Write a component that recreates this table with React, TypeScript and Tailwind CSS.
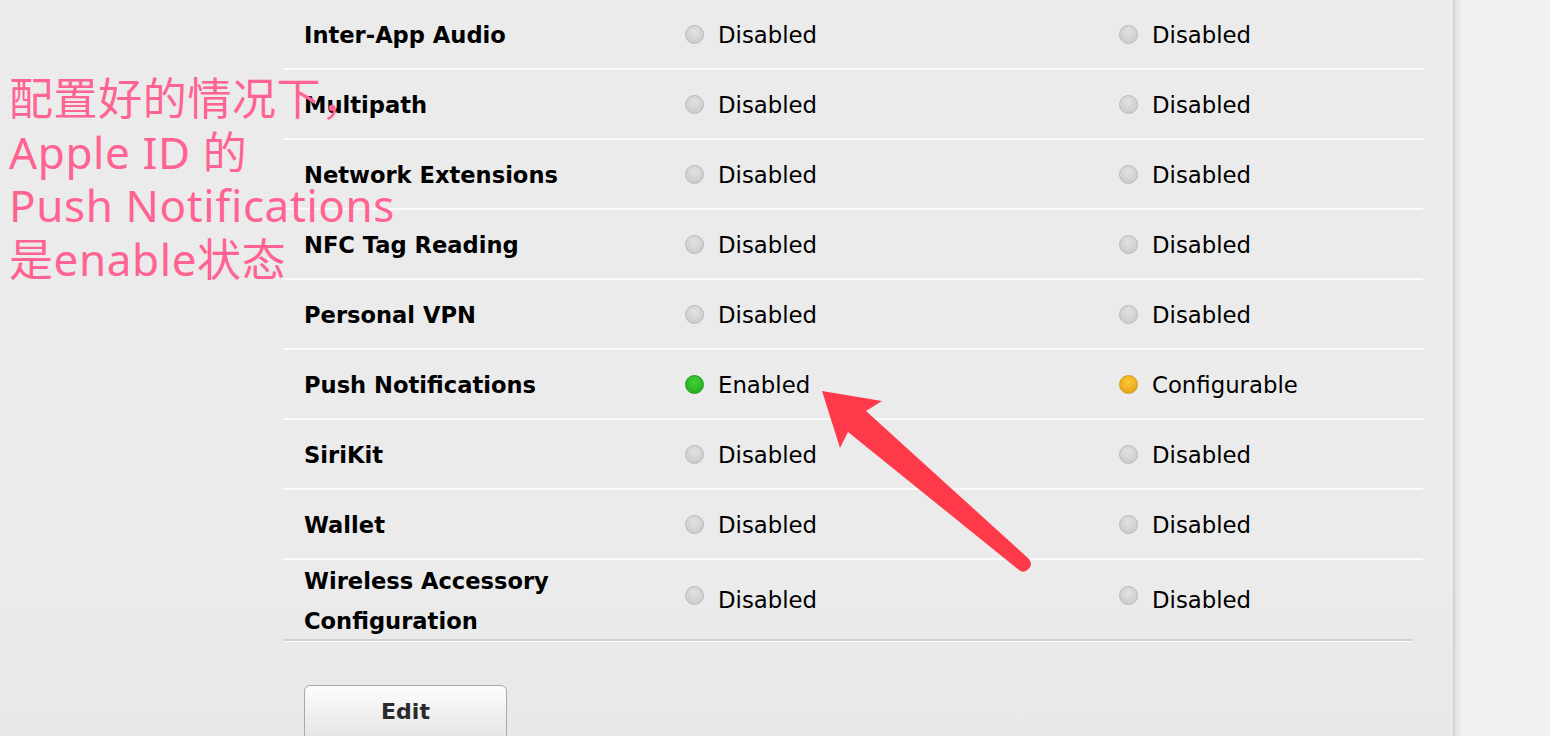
const rows = [
  { name: "Inter-App Audio", dev: "Disabled", dist: "Disabled" },
  { name: "Multipath", dev: "Disabled", dist: "Disabled" },
  { name: "Network Extensions", dev: "Disabled", dist: "Disabled" },
  { name: "NFC Tag Reading", dev: "Disabled", dist: "Disabled" },
  { name: "Personal VPN", dev: "Disabled", dist: "Disabled" },
  { name: "Push Notifications", dev: "Enabled", dist: "Configurable" },
  { name: "SiriKit", dev: "Disabled", dist: "Disabled" },
  { name: "Wallet", dev: "Disabled", dist: "Disabled" },
];

function Dot({ status, lifted }: { status: string; lifted?: boolean }) {
  let cls =
    "bg-[radial-gradient(circle_at_50%_35%,#e2e2e2,#c6c6c6)] border-[#b9b9b9]";
  if (status === "Enabled") {
    cls = "bg-[radial-gradient(circle_at_50%_35%,#45d23a,#1fa21a)] border-[#1f9a1a]";
  } else if (status === "Configurable") {
    cls = "bg-[radial-gradient(circle_at_50%_35%,#fbc934,#e29a12)] border-[#d89a1c]";
  }
  return (
    <span
      className={`inline-block h-[19px] w-[19px] shrink-0 rounded-full border ${cls} ${
        lifted ? "-translate-y-[4px]" : ""
      }`}
    />
  );
}

function Status({ status, lifted }: { status: string; lifted?: boolean }) {
  return (
    <div className="flex items-center gap-[14px]">
      <Dot status={status} lifted={lifted} />
      <span className="pt-[2px] text-[22.8px] text-black">{status}</span>
    </div>
  );
}

export default function App() {
  return (
    <div
      className="relative flex h-[736px] w-[1550px] overflow-hidden"
      style={{ fontFamily: '"DejaVu Sans", sans-serif' }}
    >
      <div className="h-full w-[1453px] bg-[linear-gradient(#ebebeb_80%,#e8e8e8)]">
        <div className="ml-[283px] w-[1140px]">
          {rows.map((r) => (
            <div
              key={r.name}
              className="flex h-[70px] items-center border-b-2 border-[#fafafa]"
            >
              <div className="w-[402px] pl-[21px] pt-[4px] text-[22.6px] font-bold text-black">
                {r.name}
              </div>
              <div className="w-[434px]">
                <Status status={r.dev} />
              </div>
              <div>
                <Status status={r.dist} />
              </div>
            </div>
          ))}
          <div className="mr-[10px] flex h-[81px] items-center border-b-2 border-[#d2d2d2] shadow-[0_1px_0_#fafafa]">
            <div className="w-[402px] pl-[21px] pt-[3px] text-[22.6px] font-bold leading-[40px] text-black">
              Wireless Accessory
              <br />
              Configuration
            </div>
            <div className="w-[434px]">
              <Status status="Disabled" lifted />
            </div>
            <div>
              <Status status="Disabled" lifted />
            </div>
          </div>
          <button className="ml-[21px] mt-[44px] h-[56px] w-[203px] rounded-[6px] border border-[#a8a8a8] bg-[linear-gradient(#fdfdfd,#e4e4e4)] pb-[3px] text-[22px] font-bold text-[#2a2a2a]">
            Edit
          </button>
        </div>
      </div>
      <div className="h-full flex-1 border-l-2 border-[#d3d3d3] bg-[linear-gradient(90deg,#e2e2e2,#f1f1f1_8px)]" />

      <div
        className="absolute left-[9px] top-[72px] text-[44px] leading-[53.5px] tracking-[0.6px] text-[#ff6392]"
        style={{ fontFamily: '"Noto Sans", "Noto Sans CJK SC", sans-serif' }}
      >
        配置好的情况下，
        <br />
        Apple ID 的
        <br />
        Push Notifications
        <br />
        是enable状态
      </div>

      <svg
        className="absolute left-0 top-0"
        width="1550"
        height="736"
        viewBox="0 0 1550 736"
      >
        <path
          d="M822 391 L882 401 L866 411 L1029 559 Q1034 566 1026 571 Q1022 573 1019 570 L848 432 L840 448 Z"
          fill="#fe3a4a"
        />
      </svg>
    </div>
  );
}
